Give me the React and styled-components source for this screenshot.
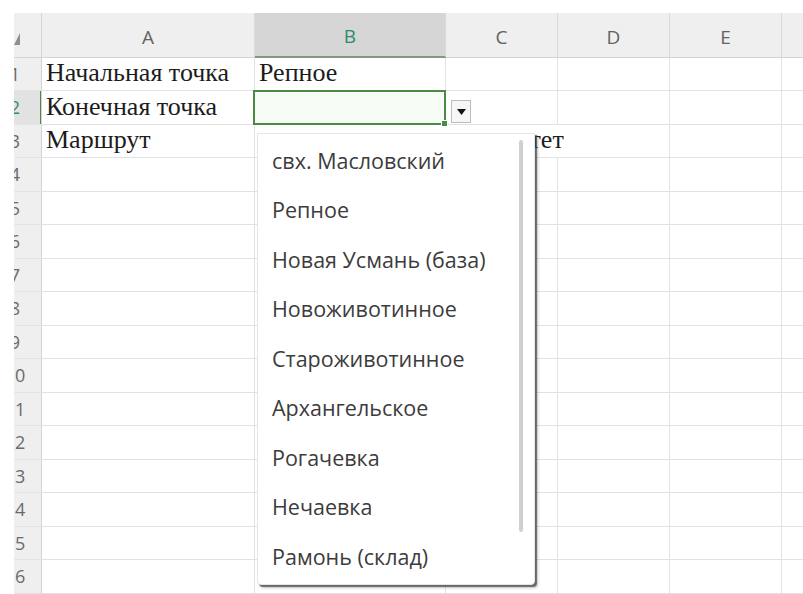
import React from "react";
import styled, { createGlobalStyle, css } from "styled-components";

const GlobalStyle = createGlobalStyle`
  html, body { margin: 0; padding: 0; background: #ffffff; }
  body { overflow: hidden; }
`;

const COLUMNS = [
  { key: "A", width: 213 },
  { key: "B", width: 191 },
  { key: "C", width: 112 },
  { key: "D", width: 112 },
  { key: "E", width: 112 },
  { key: "F", width: 112 },
];

const DATA = {
  1: { A: "Начальная точка", B: "Репное" },
  2: { A: "Конечная точка" },
  3: { A: "Маршрут", B: "по расстоянию – приоритет" },
};

const OPTIONS = [
  "свх. Масловский",
  "Репное",
  "Новая Усмань (база)",
  "Новоживотинное",
  "Староживотинное",
  "Архангельское",
  "Рогачевка",
  "Нечаевка",
  "Рамонь (склад)",
];

const ACTIVE_ROW = 2;
const ACTIVE_COL = "B";
const GREEN = "#4b8a43";

const Page = styled.div`
  position: relative;
  width: 803px;
  height: 594px;
  overflow: hidden;
  padding: 13px 0 0 14px;
  box-sizing: border-box;
  background: #ffffff;
`;

const Sheet = styled.div`
  display: grid;
  grid-template-columns: 28px ${COLUMNS.map((c) => `${c.width}px`).join(" ")};
  grid-template-rows: 45px repeat(8, 33px 34px);
`;

const Corner = styled.div`
  display: flex;
  align-items: flex-end;
  padding-bottom: 12px;
  background: #efefef;
  border-right: 1px solid #d4d4d4;
  border-bottom: 1px solid #d4d4d4;
  box-sizing: border-box;
  overflow: hidden;
`;

const ColHeader = styled.div`
  display: flex;
  align-items: flex-end;
  justify-content: center;
  padding-bottom: 8px;
  box-sizing: border-box;
  background: #efefef;
  border-right: 1px solid #dadada;
  border-bottom: 1px solid #d4d4d4;
  font-family: "Open Sans", "Noto Sans", sans-serif;
  font-size: 19px;
  line-height: 24px;
  color: #626262;
  ${(p) =>
    p.$active &&
    css`
      background: #d6d6d6;
      color: #2f8a6f;
      border-bottom: 2px solid #7b9c7b;
    `}
`;

const RowHeader = styled.div`
  position: relative;
  overflow: hidden;
  background: #efefef;
  border-right: 1px solid #d4d4d4;
  border-bottom: 1px solid #e4e4e4;
  box-sizing: border-box;
  font-family: "Open Sans", "Noto Sans", sans-serif;
  font-size: 18px;
  line-height: 32px;
  color: #6a6a6a;
  ${(p) =>
    p.$active &&
    css`
      background: #e2e2e2;
      color: #2f8a6f;
      &::after {
        content: "";
        position: absolute;
        right: -1px;
        top: 0;
        bottom: 0;
        width: 2px;
        background: ${GREEN};
      }
    `}
`;

const RowNumber = styled.span`
  display: block;
  width: 40px;
  margin-left: -19px;
  text-align: center;
`;

const Cell = styled.div`
  position: relative;
  display: flex;
  align-items: flex-end;
  padding: 0 0 4px 4px;
  box-sizing: border-box;
  border-right: 1px solid ${(p) => (p.$spill ? "transparent" : "#e2e2e2")};
  border-bottom: 1px solid #e2e2e2;
  font-family: "Liberation Serif", "Times New Roman", serif;
  font-size: 26px;
  line-height: 26px;
  color: #1c1c1c;
  white-space: nowrap;
  ${(p) =>
    p.$selected &&
    css`
      background: #f7fbf5;
      &::after {
        content: "";
        position: absolute;
        left: -2px;
        top: -1px;
        right: -1px;
        bottom: -1px;
        border: 2px solid ${GREEN};
        pointer-events: none;
      }
    `}
`;

const FillHandle = styled.span`
  position: absolute;
  right: -3px;
  bottom: -3px;
  width: 5px;
  height: 5px;
  background: ${GREEN};
  border: 1px solid #ffffff;
  z-index: 2;
`;

/* in-cell list button, hanging just right of the active cell */
const ListButton = styled.div`
  position: absolute;
  left: calc(100% + 6px);
  bottom: 1px;
  width: 20px;
  height: 23px;
  box-sizing: border-box;
  border: 1px solid #bdbdbd;
  background: #f6f6f6;
  display: flex;
  align-items: center;
  justify-content: center;
  z-index: 3;
`;

/* the open validation list, dropped below the active cell */
const Dropdown = styled.div`
  position: absolute;
  left: 2px;
  top: calc(100% + 9px);
  width: 278px;
  height: 452px;
  box-sizing: border-box;
  background: #ffffff;
  border: 1px solid #e6e6e6;
  border-radius: 0 0 4px 4px;
  box-shadow: 2px 2px 1px rgba(70, 70, 70, 0.75), 3px 3px 3px rgba(0, 0, 0, 0.2);
  display: flex;
  z-index: 10;
  white-space: nowrap;
`;

const OptionList = styled.div`
  flex: 1;
  display: flex;
  flex-direction: column;
  padding-top: 2px;
`;

const Option = styled.div`
  height: 49.5px;
  display: flex;
  align-items: center;
  padding-left: 14px;
  font-family: "Open Sans", "Noto Sans", sans-serif;
  font-size: 21.5px;
  color: #3c3c3c;
`;

const ScrollTrack = styled.div`
  width: 4px;
  margin: 6px 11px 0 0;
`;

const ScrollThumb = styled.div`
  height: 392px;
  border-radius: 2px;
  background: #cfcfcf;
`;

export default function App() {
  const rows = Array.from({ length: 16 }, (_, i) => i + 1);
  return (
    <>
      <GlobalStyle />
      <Page>
        <Sheet>
          <Corner>
            <svg width="7" height="12" viewBox="0 0 7 12">
              <polygon points="0,12 6,0 6,12" fill="#8f8f8f" />
            </svg>
          </Corner>
          {COLUMNS.map((c) => (
            <ColHeader key={c.key} $active={c.key === ACTIVE_COL}>
              {c.key}
            </ColHeader>
          ))}
          {rows.map((r) => (
            <React.Fragment key={r}>
              <RowHeader $active={r === ACTIVE_ROW}>
                <RowNumber>{r}</RowNumber>
              </RowHeader>
              {COLUMNS.map((c) => {
                const value = DATA[r] && DATA[r][c.key];
                const selected = r === ACTIVE_ROW && c.key === ACTIVE_COL;
                const spill = r === 3 && (c.key === "B" || c.key === "C");
                return (
                  <Cell key={c.key} $selected={selected} $spill={spill}>
                    {value && <span>{value}</span>}
                    {selected && (
                      <>
                        <FillHandle />
                        <ListButton>
                          <svg width="9" height="6" viewBox="0 0 9 6">
                            <polygon points="0,0 9,0 4.5,6" fill="#111111" />
                          </svg>
                        </ListButton>
                        <Dropdown>
                          <OptionList>
                            {OPTIONS.map((o) => (
                              <Option key={o}>{o}</Option>
                            ))}
                          </OptionList>
                          <ScrollTrack>
                            <ScrollThumb />
                          </ScrollTrack>
                        </Dropdown>
                      </>
                    )}
                  </Cell>
                );
              })}
            </React.Fragment>
          ))}
        </Sheet>
      </Page>
    </>
  );
}
